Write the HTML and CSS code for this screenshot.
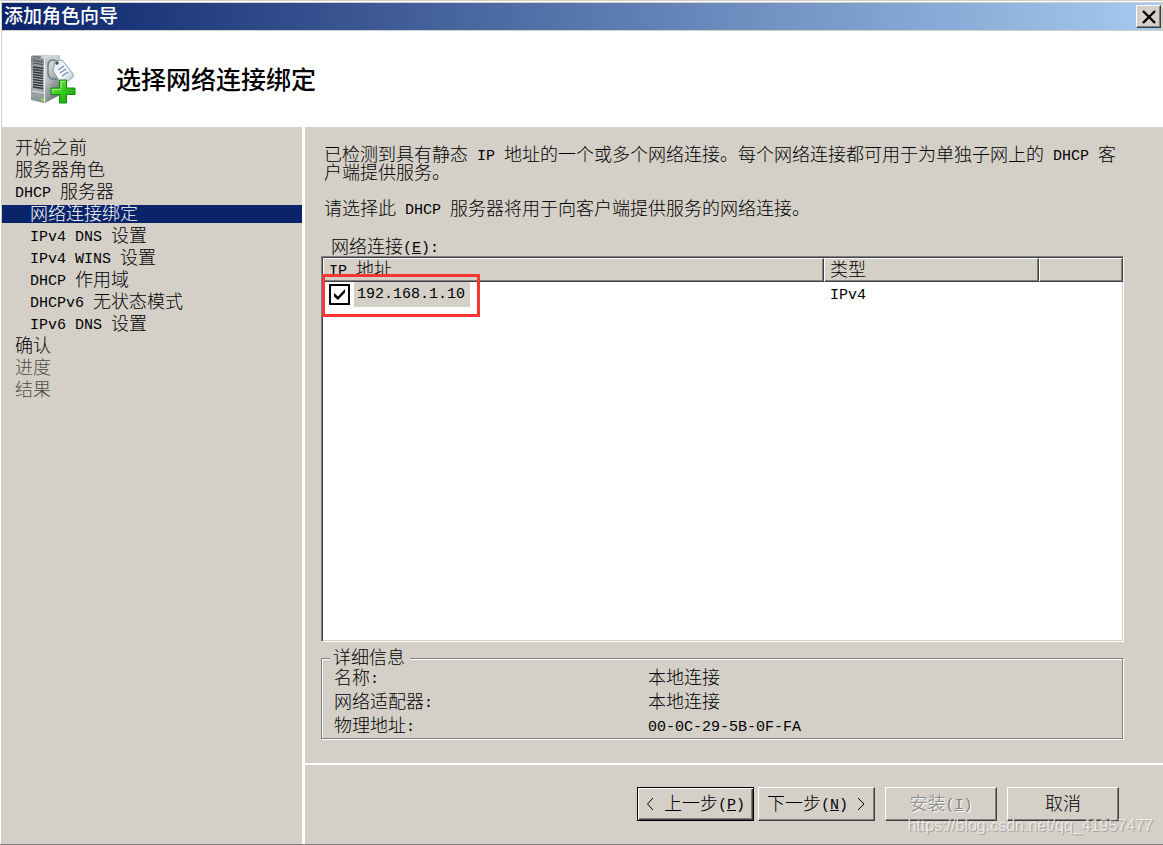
FILE: index.html
```html
<!DOCTYPE html>
<html lang="zh-CN">
<head>
    <meta charset="utf-8">
    <title>添加角色向导</title>
    <link rel="stylesheet" href="styles.css">
</head>
<body>
    <div class="window">
        <div class="titlebar">
            <span class="title">添加角色向导</span>
            <button type="button" class="close" aria-label="关闭">
                <svg width="14" height="14" viewBox="0 0 14 14"><path d="M1 1l12 12M13 1L1 13" stroke="#000" stroke-width="2.4"/></svg>
            </button>
        </div>
        <header class="banner">
            <svg class="server" width="46" height="50" viewBox="0 0 46 50">
                <defs>
                    <linearGradient id="side" x1="0" y1="0" x2="1" y2="1">
                        <stop offset="0" stop-color="#a0a8ad"/>
                        <stop offset=".45" stop-color="#cdd3d6"/>
                        <stop offset="1" stop-color="#4f575c"/>
                    </linearGradient>
                    <linearGradient id="front" x1="0" y1="0" x2="0" y2="1">
                        <stop offset="0" stop-color="#7d858a"/>
                        <stop offset=".5" stop-color="#b8bfc3"/>
                        <stop offset="1" stop-color="#878f93"/>
                    </linearGradient>
                    <linearGradient id="tag" x1="0" y1="0" x2="1" y2="1">
                        <stop offset="0" stop-color="#d5e4ed"/>
                        <stop offset=".5" stop-color="#fff"/>
                        <stop offset="1" stop-color="#9dbccf"/>
                    </linearGradient>
                    <linearGradient id="plus" x1="0" y1="0" x2="1" y2="1">
                        <stop offset="0" stop-color="#7ce650"/>
                        <stop offset=".5" stop-color="#36c81c"/>
                        <stop offset="1" stop-color="#109407"/>
                    </linearGradient>
                </defs>
                <path d="M0 2L3 1h26v40L14 49z" fill="url(#side)"/>
                <path d="M1 2.500L4 1.500h24L14 5z" fill="#d3d8da"/>
                <path d="M3 2l8 .5-2 1.500-8-1z" fill="#5d656a"/>
                <path d="M0 3l13 2v44L0 46z" fill="url(#front)"/>
                <path d="M13.500 5v43" stroke="#eff2f3"/>
                <path d="M2 6.500l10 1.500M2 9l10 1.500" stroke="#4b5358"/>
                <path d="M2 13l10 1.500M2 15.500l10 1.500M2 18l10 1.500M2 20.500l10 1.500M2 23l10 1.500M2 25.500l10 1.500M2 28l10 1.500M2 30.500l10 1.500M2 33l10 1.500" stroke="#30363a" stroke-width="1.300"/>
                <path d="M1 37l12 2" stroke="#e1e5e6"/>
                <path d="M10 44.500l3 .5v2l-3-.5z" fill="#8cec20"/>
                <path d="M26 7c-5-2-9-1-9 4v8c0 5 4 7 9 6" fill="none" stroke="#737e86" stroke-width="1.500"/>
                <path d="M24 7l7-1 11 14c1 2 0 3-1 4l-8 6c-1 1-2 0-3-1l-8-12z" fill="url(#tag)" stroke="#8aa2b2"/>
                <circle cx="26" cy="9" r="1.700" fill="#484e54"/>
                <path d="M27 16l6-4M29 19l6-4M31 22l6-4" stroke="#7088b4" stroke-width="1.300"/>
                <path d="M28.500 26h7v8H44v6.500h-8.500V49h-7v-8.500H20V34h8.500z" fill="url(#plus)" stroke="#138a0b"/>
                <path d="M30 34v-6.500h4M21.500 38v-2.500H30" fill="none" stroke="#a0f27c"/>
            </svg>
            <h1>选择网络连接绑定</h1>
        </header>
        <div class="body">
            <nav class="steps">
                <ul>
                    <li>开始之前</li>
                    <li>服务器角色</li>
                    <li><span class="en">DHCP </span>服务器</li>
                    <li class="sub current">网络连接绑定</li>
                    <li class="sub"><span class="en">IPv4 DNS </span>设置</li>
                    <li class="sub"><span class="en">IPv4 WINS </span>设置</li>
                    <li class="sub"><span class="en">DHCP </span>作用域</li>
                    <li class="sub"><span class="en">DHCPv6 </span>无状态模式</li>
                    <li class="sub"><span class="en">IPv6 DNS </span>设置</li>
                    <li>确认</li>
                    <li class="pending">进度</li>
                    <li class="pending">结果</li>
                </ul>
            </nav>
            <div class="content">
                <main class="page">
                    <p>已检测到具有静态<span class="en"> IP </span>地址的一个或多个网络连接。每个网络连接都可用于为单独子网上的<span class="en"> DHCP </span>客户端提供服务。</p>
                    <p>请选择此<span class="en"> DHCP </span>服务器将用于向客户端提供服务的网络连接。</p>
                    <div class="list-label" id="list-label">网络连接<span class="en">(<u>E</u>):</span></div>
                    <div class="list">
                        <table aria-labelledby="list-label">
                            <thead>
                                <tr>
                                    <th class="col-ip"><span class="en">IP </span>地址</th>
                                    <th class="col-type">类型</th>
                                    <th></th>
                                </tr>
                            </thead>
                            <tbody>
                                <tr>
                                    <td class="ip">
                                        <div class="pick">
                                            <input type="checkbox" id="ip1" checked>
                                            <label for="ip1" class="en">192.168.1.10</label>
                                        </div>
                                    </td>
                                    <td><span class="en">IPv4</span></td>
                                    <td></td>
                                </tr>
                            </tbody>
                        </table>
                        <div class="marker"></div>
                    </div>
                    <fieldset>
                        <legend>详细信息</legend>
                        <dl>
                            <dt>名称<span class="en">:</span></dt>
                            <dd>本地连接</dd>
                            <dt>网络适配器<span class="en">:</span></dt>
                            <dd>本地连接</dd>
                            <dt>物理地址<span class="en">:</span></dt>
                            <dd><span class="en">00-0C-29-5B-0F-FA</span></dd>
                        </dl>
                    </fieldset>
                </main>
                <footer class="buttons">
                    <button type="button" class="btn wide default"><svg width="9" height="14" viewBox="0 0 9 14"><path d="M7 1L1.500 7L7 13" fill="none" stroke="currentColor"/></svg><span class="en"> </span>上一步<span class="en">(<u>P</u>)</span></button>
                    <button type="button" class="btn wide next">下一步<span class="en">(<u>N</u>) </span><svg width="9" height="14" viewBox="0 0 9 14"><path d="M1 1l6 6L1 13" fill="none" stroke="currentColor"/></svg></button>
                    <button type="button" class="btn" disabled>安装<span class="en">(<u>I</u>)</span></button>
                    <button type="button" class="btn">取消</button>
                </footer>
            </div>
        </div>
        <div class="watermark">https://blog.csdn.net/qq_41957477</div>
    </div>
</body>
</html>
```
FILE: styles.css
```css
* {
    box-sizing: border-box;
}

body {
    margin: 0;
    font-family: "Noto Sans CJK SC", sans-serif;
    font-size: 18px;
    font-weight: 300;
    line-height: 18px;
    color: #000;
    background: #d4d0c8;
}

/* Latin text takes half the width of a Chinese character */
.en {
    font-family: "Liberation Mono", monospace;
    font-size: 15px;
    font-weight: 400;
    line-height: 10px;
    vertical-align: 1px;
    white-space: pre;
}

.window {
    position: relative;
    display: flex;
    flex-direction: column;
    min-height: 100vh;
    padding: 1px 0 0 1px;
    border-top: 1px solid #d4d0c8;
    border-bottom: 1px solid #808080;
    background: #d4d0c8;
    box-shadow: inset 1px 1px #fff;
}

.titlebar {
    display: flex;
    align-items: center;
    justify-content: space-between;
    height: 27px;
    margin: 1px 2px 1px 1px;
    padding-left: 2px;
    background: linear-gradient(to right, #0a246a, #a6caf0);
}

.title {
    padding-bottom: 3px;
    font-size: 19px;
    font-weight: 500;
    line-height: 24px;
    color: #fff;
}

.close {
    display: flex;
    align-items: center;
    justify-content: center;
    width: 25px;
    height: 23px;
    padding: 0;
    border: 1px solid;
    border-color: #fff #404040 #404040 #fff;
    background: #d4d0c8;
    box-shadow: inset -1px -1px #808080;
}

.banner {
    display: flex;
    align-items: center;
    height: 96px;
    margin-left: 1px;
    padding-left: 29px;
    background: #fff;
}

h1 {
    margin: 0 0 0 39px;
    padding-bottom: 2px;
    font-size: 25px;
    font-weight: 500;
    line-height: 32px;
}

.body {
    display: flex;
    flex: 1;
    margin-left: 1px;
}

.steps {
    width: 300px;
    padding-top: 12px;
}

.steps ul {
    display: flex;
    flex-direction: column;
    gap: 4px;
    margin: 0;
    padding: 0;
    list-style: none;
}

.steps li {
    height: 18px;
    padding-left: 13px;
    line-height: 14px;
}

.steps .sub {
    padding-left: 28px;
}

.steps .current {
    color: #fff;
    background: #0a246a;
}

.steps .pending {
    color: #4c4a46;
}

.content {
    display: flex;
    flex: 1;
    flex-direction: column;
    border-left: 3px solid #fff;
}

.page {
    display: flex;
    flex: 1;
    flex-direction: column;
    padding: 17px 39px 24px 16px;
}

p {
    margin: 0 0 18px;
    padding-left: 3px;
}

.list-label {
    margin: 2px 0;
    padding-left: 10px;
}

.list {
    position: relative;
    flex: 1;
    padding: 1px 0 0 1px;
    border: 1px solid;
    border-color: #808080 #fff #fff #808080;
    background: #fff;
    box-shadow: inset 1px 1px #404040, inset -1px -1px #d4d0c8;
}

table {
    width: 100%;
    table-layout: fixed;
    border-spacing: 0;
}

th {
    height: 24px;
    padding: 0 6px 4px 5px;
    border: 1px solid;
    border-color: #fff #404040 #404040 #fff;
    background: #d4d0c8;
    box-shadow: inset -1px -1px #808080;
    font-weight: 300;
    text-align: left;
}

.col-ip {
    width: 501px;
}

.col-type {
    width: 215px;
}

td {
    height: 25px;
    padding: 0 6px 6px;
}

.ip {
    padding-bottom: 0;
}

.pick {
    display: flex;
    align-items: center;
    gap: 4px;
}

.pick input {
    display: flex;
    align-items: center;
    justify-content: center;
    width: 21px;
    height: 21px;
    margin: 0;
    appearance: none;
    border: 2px solid #000;
    background: #fff;
}

.pick input:checked::before {
    content: "";
    width: 11px;
    height: 11px;
    background: #000;
    clip-path: polygon(0 36%, 36% 68%, 100% 0, 100% 32%, 36% 100%, 0 68%);
}

.pick label {
    height: 25px;
    padding: 0 5px 0 3px;
    line-height: 25px;
    background: #d4d0c8;
}

/* red frame round the selected address */
.marker {
    position: absolute;
    top: 17px;
    left: 0;
    width: 158px;
    height: 43px;
    border: 3px solid #fb3434;
    pointer-events: none;
}

fieldset {
    min-width: 0;
    margin: 7px 1px 0 0;
    padding: 0 12px;
    border: 1px solid #808080;
    box-shadow: 1px 1px #fff, inset 1px 1px #fff;
}

legend {
    height: 18px;
    margin-left: -4px;
    padding: 0 5px 0 3px;
    line-height: 14px;
    background: #d4d0c8;
}

dl {
    display: grid;
    grid-template-columns: 314px 1fr;
    row-gap: 6px;
    margin: 0 0 5px;
}

dd {
    margin: 0;
}

.buttons {
    display: flex;
    justify-content: flex-end;
    height: 81px;
    padding: 22px 44px 0 0;
    border-top: 2px solid #fff;
}

.btn {
    width: 112px;
    height: 34px;
    margin-left: 10px;
    padding: 0 0 4px;
    border: 1px solid;
    border-color: #fff #404040 #404040 #fff;
    background: #d4d0c8;
    box-shadow: inset -1px -1px #808080;
    font: inherit;
    color: #000;
}

.btn svg {
    vertical-align: -1px;
}

.wide {
    width: 117px;
}

.default {
    border-color: #000;
    box-shadow: inset 1px 1px #fff, inset -1px -1px #404040, inset -2px -2px #808080;
}

.next {
    margin-left: 4px;
}

.btn:disabled {
    color: #808080;
    text-shadow: 1px 1px #fff;
}

.watermark {
    position: absolute;
    right: 10px;
    bottom: 9px;
    font-family: "Liberation Sans", sans-serif;
    font-size: 16px;
    font-weight: 400;
    color: rgba(255, 255, 255, 0.7);
    text-shadow: 1px 1px 1px rgba(0, 0, 0, 0.25);
    pointer-events: none;
}
```
